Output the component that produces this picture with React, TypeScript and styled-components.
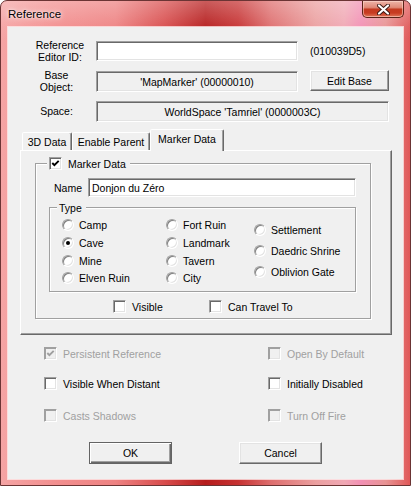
import React from "react";
import styled, { createGlobalStyle } from "styled-components";

const GlobalStyle = createGlobalStyle`
  html, body { margin: 0; padding: 0; }
  body { background: #ffffff; overflow: hidden; }
  * { box-sizing: border-box; }
`;

const FONT = `"Liberation Sans", Arial, sans-serif`;

const Window = styled.div`
  width: 411px;
  height: 486px;
  border: 1px solid #6b3434;
  border-radius: 7px 7px 0 0;
  background:
    linear-gradient(180deg, rgba(255,255,255,0.28) 0px, rgba(255,255,255,0.05) 26px, rgba(255,255,255,0) 40px),
    linear-gradient(90deg, #f5a4a4 0%, #f28e8e 14%, #ee8282 28%, #d84c4c 40%, #b51c1c 50%, #c63232 58%, #de6e6e 66%, #eba0a0 77%, #f0a8b4 84%, #f290b4 88%, #e89494 94%, #e05858 100%);
  display: flex;
  flex-direction: column;
  overflow: hidden;
  font-family: ${FONT};
  font-size: 10.5px;
  color: #000;
`;

const TitleBar = styled.div`
  height: 26px;
  display: flex;
  justify-content: space-between;
  align-items: flex-start;
  padding: 0 6px 0 7px;
`;

const Title = styled.span`
  font-size: 11.5px;
  line-height: 14px;
  margin-top: 6px;
  text-shadow: 0 0 6px rgba(255,255,255,0.95), 0 0 3px rgba(255,255,255,0.9);
`;

const CloseButton = styled.div`
  width: 42px;
  height: 17px;
  border: 1px solid #5a2418;
  border-top: none;
  border-radius: 0 0 5px 5px;
  background: linear-gradient(180deg, #eeb4a8 0%, #e08a78 40%, #c43a20 52%, #c83c22 75%, #e0785c 100%);
  box-shadow: inset 0 0 0 1px rgba(255,220,210,0.55);
  display: flex;
  align-items: center;
  justify-content: center;
`;

const Client = styled.div`
  margin: 0 7px 6px;
  height: 452px;
  background: #f0f0f0;
  box-shadow: 0 0 0 1px rgba(255,240,240,0.75);
  display: flex;
  flex-direction: column;
`;

const TopGrid = styled.div`
  display: grid;
  grid-template-columns: 72px 202px 12px 79px;
  grid-template-rows: 20px 22px 21px;
  row-gap: 9px;
  margin: 14px 0 0 16px;
`;

const FieldLabel = styled.div<{ $shift?: number }>`
  display: flex;
  align-items: center;
  justify-content: center;
  text-align: center;
  line-height: 12.5px;
  padding-right: ${(p) => p.$shift ?? 0}px;
`;

const Field = styled.div<{ $white?: boolean; $center?: boolean; $h?: number; $span?: boolean }>`
  height: ${(p) => p.$h ?? 20}px;
  align-self: end;
  grid-column: ${(p) => (p.$span ? "2 / 5" : "auto")};
  background: ${(p) => (p.$white ? "#ffffff" : "#f0f0f0")};
  border: 1px solid;
  border-color: #a0a0a0 #ffffff #ffffff #a0a0a0;
  box-shadow: inset 1px 1px 0 #696969, inset -1px -1px 0 #e3e3e3;
  display: flex;
  align-items: center;
  justify-content: ${(p) => (p.$center ? "center" : "flex-start")};
  padding: 0 3px;
  white-space: nowrap;
`;

const SideText = styled.div`
  grid-column: 3 / 5;
  padding-left: 12px;
  display: flex;
  align-items: center;
`;

const Button = styled.div<{ $default?: boolean; $w?: number; $h?: number }>`
  width: ${(p) => p.$w ?? 83}px;
  height: ${(p) => p.$h ?? 22}px;
  background: #f0f0f0;
  display: flex;
  align-items: center;
  justify-content: center;
  border: 1px solid;
  border-color: ${(p) => (p.$default ? "#646464" : "#ffffff #696969 #696969 #ffffff")};
  box-shadow: ${(p) =>
    p.$default
      ? "inset 1px 1px 0 #ffffff, inset -1px -1px 0 #696969, inset -2px -2px 0 #a0a0a0"
      : "inset -1px -1px 0 #a0a0a0, inset 1px 1px 0 #e3e3e3"};
`;

const EditBase = styled(Button)`
  grid-column: 4;
  align-self: start;
`;

const TabStrip = styled.div`
  display: flex;
  align-items: flex-end;
  height: 21px;
  margin: 7px 0 0 14px;
`;

const Tab = styled.div<{ $active?: boolean; $w: number }>`
  width: ${(p) => p.$w}px;
  height: ${(p) => (p.$active ? 22 : 18)}px;
  margin-bottom: ${(p) => (p.$active ? -1 : 0)}px;
  position: relative;
  z-index: ${(p) => (p.$active ? 2 : 1)};
  background: #f0f0f0;
  border: 1px solid;
  border-bottom: none;
  border-color: #ffffff #696969 transparent #ffffff;
  border-radius: 2px 2px 0 0;
  box-shadow: inset -1px 0 0 #a0a0a0;
  display: flex;
  align-items: ${(p) => (p.$active ? "flex-start" : "center")};
  padding-top: ${(p) => (p.$active ? 3 : 0)}px;
  justify-content: center;
  white-space: nowrap;
`;

const Panel = styled.div`
  margin-left: 12px;
  width: 372px;
  height: 185px;
  border: 1px solid;
  border-color: #ffffff #696969 #696969 #ffffff;
  box-shadow: inset -1px -1px 0 #a0a0a0;
  padding: 12px 0 0 14px;
  position: relative;
  z-index: 1;
`;

const Group = styled.div<{ $w: number; $h: number }>`
  position: relative;
  width: ${(p) => p.$w}px;
  height: ${(p) => p.$h}px;
  border: 1px solid #a0a0a0;
  box-shadow: inset 1px 1px 0 #ffffff, 1px 1px 0 #ffffff;
`;

const Legend = styled.div<{ $left: number }>`
  position: absolute;
  top: -7px;
  left: ${(p) => p.$left}px;
  height: 13px;
  background: #f0f0f0;
  padding: 0 4px 0 2px;
  display: flex;
  align-items: center;
  gap: 6px;
  white-space: nowrap;
`;

const MarkerBody = styled.div`
  display: flex;
  flex-direction: column;
  padding: 14px 0 0 13px;
`;

const NameRow = styled.div`
  display: flex;
  align-items: center;
  height: 19px;
`;

const NameLabel = styled.span`
  margin-left: 5px;
  width: 34px;
`;

const TypeGrid = styled.div`
  display: grid;
  grid-template-columns: 104px 88px auto;
  padding-left: 12px;
  height: 100%;
`;

const RadioCol = styled.div<{ $top: number }>`
  display: flex;
  flex-direction: column;
  padding-top: ${(p) => p.$top}px;
`;

const RadioItem = styled.div<{ $h: number }>`
  height: ${(p) => p.$h}px;
  display: flex;
  align-items: center;
  gap: 5px;
  white-space: nowrap;
`;

const RadioDot = styled.span<{ $on?: boolean }>`
  width: 12px;
  height: 12px;
  flex: none;
  border-radius: 50%;
  border: 1px solid;
  border-color: #a0a0a0 #ffffff #ffffff #a0a0a0;
  box-shadow: inset 1px 1px 0 #808080, inset -1px -1px 0 #e3e3e3;
  background: #ffffff;
  display: flex;
  align-items: center;
  justify-content: center;
  &::after {
    content: "";
    width: 4px;
    height: 4px;
    border-radius: 50%;
    background: #000;
    display: ${(p) => (p.$on ? "block" : "none")};
  }
`;

const VisibleRow = styled.div`
  display: flex;
  align-items: center;
  margin-top: 8px;
  padding-left: 64px;
  height: 13px;
`;

const CheckItem = styled.div<{ $w?: number; $disabled?: boolean }>`
  display: flex;
  align-items: center;
  gap: 6px;
  width: ${(p) => (p.$w ? `${p.$w}px` : "auto")};
  color: ${(p) => (p.$disabled ? "#a0a0a0" : "#000")};
  white-space: nowrap;
  height: 13px;
`;

const Box = styled.span<{ $disabled?: boolean }>`
  width: 13px;
  height: 13px;
  flex: none;
  border: 1px solid;
  border-color: #a0a0a0 #ffffff #ffffff #a0a0a0;
  box-shadow: inset 1px 1px 0 ${(p) => (p.$disabled ? "#a0a0a0" : "#696969")}, inset -1px -1px 0 #e3e3e3;
  background: ${(p) => (p.$disabled ? "#f0f0f0" : "#ffffff")};
  display: flex;
  align-items: center;
  justify-content: center;
`;

const Options = styled.div`
  display: grid;
  grid-template-columns: 224px auto;
  grid-template-rows: 30px 32px 13px;
  margin: 12px 0 0 36px;
`;

const ButtonRow = styled.div`
  display: flex;
  gap: 67px;
  margin: 20px 0 0 81px;
`;

const CheckMark = ({ color }: { color: string }) => (
  <svg width="9" height="9" viewBox="0 0 9 9">
    <polyline points="1.3,4 3.4,6.2 7.7,1.8" fill="none" stroke={color} strokeWidth="1.9" />
  </svg>
);

const Check = ({
  label,
  checked,
  disabled,
  w,
}: {
  label: string;
  checked?: boolean;
  disabled?: boolean;
  w?: number;
}) => (
  <CheckItem $w={w} $disabled={disabled}>
    <Box $disabled={disabled}>{checked && <CheckMark color={disabled ? "#a0a0a0" : "#000"} />}</Box>
    <span>{label}</span>
  </CheckItem>
);

const Radio = ({ label, on, h }: { label: string; on?: boolean; h: number }) => (
  <RadioItem $h={h}>
    <RadioDot $on={on} />
    <span>{label}</span>
  </RadioItem>
);

export default function App() {
  return (
    <>
      <GlobalStyle />
      <Window>
        <TitleBar>
          <Title>Reference</Title>
          <CloseButton>
            <svg width="13" height="11" viewBox="0 0 13 11">
              <path d="M2 1.5 L11 9.5 M11 1.5 L2 9.5" stroke="#3a1a14" strokeWidth="4" strokeLinecap="round" />
              <path d="M2 1.5 L11 9.5 M11 1.5 L2 9.5" stroke="#ffffff" strokeWidth="2.2" strokeLinecap="round" />
            </svg>
          </CloseButton>
        </TitleBar>
        <Client>
          <TopGrid>
            <FieldLabel>
              Reference
              <br />
              Editor ID:
            </FieldLabel>
            <Field $white />
            <SideText>(010039D5)</SideText>

            <FieldLabel $shift={7}>
              Base
              <br />
              Object:
            </FieldLabel>
            <Field $center $h={21}>
              'MapMarker' (00000010)
            </Field>
            <EditBase $w={79} $h={21}>
              Edit Base
            </EditBase>

            <FieldLabel $shift={7}>Space:</FieldLabel>
            <Field $center $h={21} $span>
              WorldSpace 'Tamriel' (0000003C)
            </Field>
          </TopGrid>

          <TabStrip>
            <Tab $w={50}>3D Data</Tab>
            <Tab $w={78}>Enable Parent</Tab>
            <Tab $w={74} $active>
              Marker Data
            </Tab>
          </TabStrip>
          <Panel>
            <Group $w={336} $h={156}>
              <Legend $left={11}>
                <Box>
                  <CheckMark color="#000" />
                </Box>
                <span>Marker Data</span>
              </Legend>
              <MarkerBody>
                <NameRow>
                  <NameLabel>Name</NameLabel>
                  <Field $white $h={19} style={{ width: 268 }}>
                    Donjon du Zéro
                  </Field>
                </NameRow>
                <div style={{ height: 10 }} />
                <Group $w={307} $h={85}>
                  <Legend $left={7}>
                    <span>Type</span>
                  </Legend>
                  <TypeGrid>
                    <RadioCol $top={8.5}>
                      <Radio label="Camp" h={17.7} />
                      <Radio label="Cave" on h={17.7} />
                      <Radio label="Mine" h={17.7} />
                      <Radio label="Elven Ruin" h={17.7} />
                    </RadioCol>
                    <RadioCol $top={8.5}>
                      <Radio label="Fort Ruin" h={17.7} />
                      <Radio label="Landmark" h={17.7} />
                      <Radio label="Tavern" h={17.7} />
                      <Radio label="City" h={17.7} />
                    </RadioCol>
                    <RadioCol $top={11.5}>
                      <Radio label="Settlement" h={21} />
                      <Radio label="Daedric Shrine" h={21} />
                      <Radio label="Oblivion Gate" h={21} />
                    </RadioCol>
                  </TypeGrid>
                </Group>
                <VisibleRow>
                  <Check label="Visible" w={96} />
                  <Check label="Can Travel To" />
                </VisibleRow>
              </MarkerBody>
            </Group>
          </Panel>

          <Options>
            <Check label="Persistent Reference" checked disabled />
            <Check label="Open By Default" disabled />
            <Check label="Visible When Distant" />
            <Check label="Initially Disabled" />
            <Check label="Casts Shadows" disabled />
            <Check label="Turn Off Fire" disabled />
          </Options>

          <ButtonRow>
            <Button $default>OK</Button>
            <Button>Cancel</Button>
          </ButtonRow>
        </Client>
      </Window>
    </>
  );
}
